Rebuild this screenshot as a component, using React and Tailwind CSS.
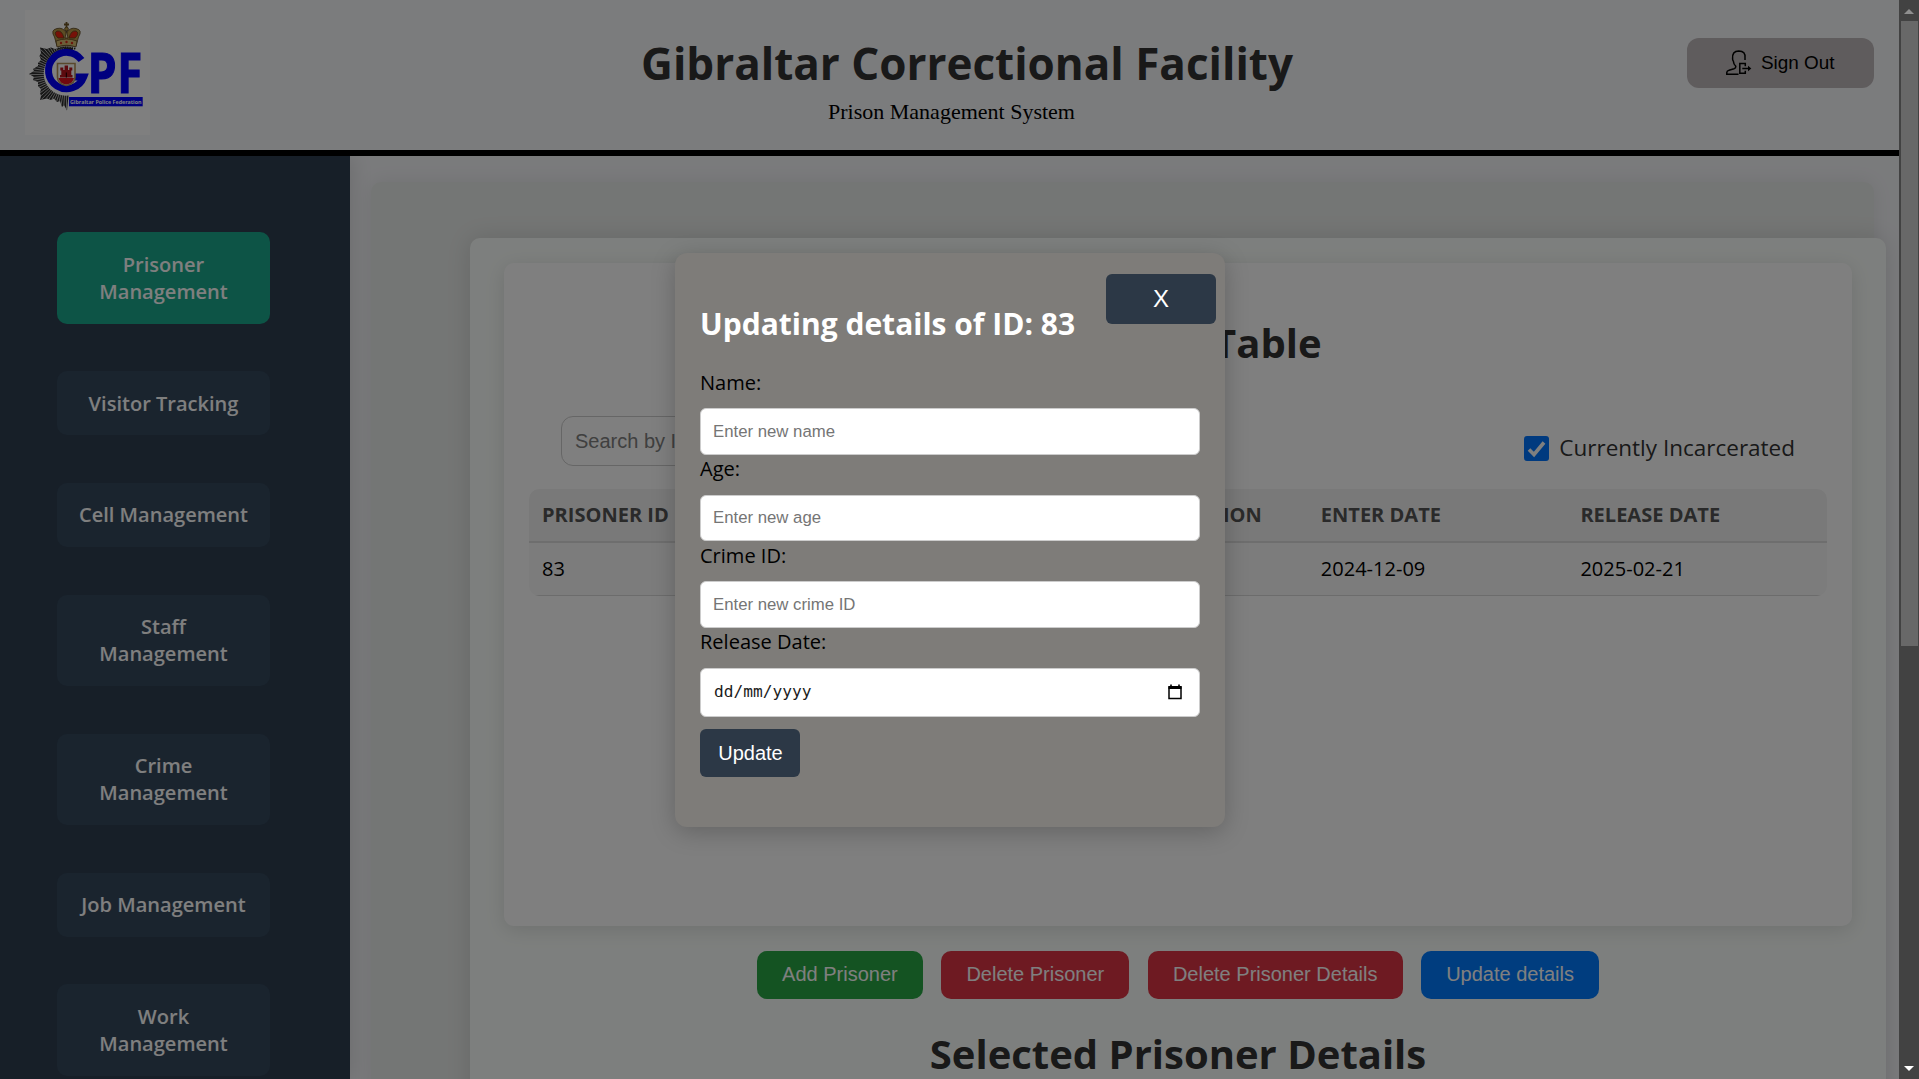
const NAV = [
  { lines: ["Prisoner", "Management"], active: true },
  { lines: ["Visitor Tracking"] },
  { lines: ["Cell Management"] },
  { lines: ["Staff", "Management"] },
  { lines: ["Crime", "Management"] },
  { lines: ["Job Management"] },
  { lines: ["Work", "Management"] },
];

const RAYS = Array.from({ length: 37 }, (_, i) => {
  const a = ((84 + i * 5) * Math.PI) / 180;
  return { x: 41 + 66 * Math.cos(a), y: 64 + 66 * Math.sin(a) };
});

function Logo() {
  return (
    <svg className="mt-[10px] block h-[125px] w-[125px] bg-[#fefefe]" viewBox="0 0 125 125">
      <defs>
        <clipPath id="star">
          <path d="M48 38 L38 37 L30 39 L26 37.500 L22 39 L15 37.500 L16 43 L14.500 46 L16 50 L13 53 L13 56 L8 59 L9 61 L4 64 L9 67 L8 70 L13 72 L13 76 L16 79 L15 83 L16 86 L15 90 L22 88.500 L26 90 L29 88.500 L32 92 L35 91 L37 97 L39 95 L42 100.500 L43.500 86 Z" />
        </clipPath>
      </defs>
      <g clipPath="url(#star)">
        <rect x="0" y="30" width="60" height="75" fill="#2c2c2c" />
        {RAYS.map((r, i) => (
          <line key={i} x1="41" y1="64" x2={r.x} y2={r.y} stroke="#c0c0c0" strokeWidth="0.9" />
        ))}
      </g>
      <circle cx="41" cy="63.500" r="22.300" fill="#fefefe" />
      <g stroke="#5a4420" strokeWidth="0.8">
        <path d="M32 36 L29.500 27 Q25 20 32 18.500 Q38 17 41.500 23 Q45 17 51 18.500 Q58 20 53.500 27 L51 36 Z" fill="#b89a4a" />
        <path d="M33 28 Q28 23 32 21 Q37 20 39 28 Z" fill="#ef2410" />
        <path d="M50 28 Q55 23 51 21 Q46 20 44 28 Z" fill="#ef2410" />
        <path d="M40 28 L41.500 21 L43 28 Z" fill="#f4e8c0" />
        <path d="M31 31 Q41.500 27 52 31 L51 37 Q41.500 33.500 32 37 Z" fill="#d7bd72" />
        <path d="M41.500 12 V21 M39 14.500 H44" stroke="#6d5526" strokeWidth="1.800" />
        <circle cx="41.500" cy="19" r="1.900" fill="#b89a4a" />
      </g>
      <g fill="#d42a18">
        <circle cx="36" cy="33" r="1.200" />
        <circle cx="41.500" cy="32" r="1.200" />
        <circle cx="47" cy="33" r="1.200" />
      </g>
      <path d="M33 38.500 Q41.500 36 51 39" stroke="#222" strokeWidth="1.600" fill="none" strokeDasharray="1.500 0.800" />
      <path d="M56.500 50 A18.200 18.200 0 1 0 58.700 67 H48" fill="none" stroke="#0000ff" strokeWidth="7" />
      <path d="M32.500 53.500 H50 V67 Q50 74 41.300 75.500 Q32.500 74 32.500 67 Z" fill="#fff" stroke="#b3935a" strokeWidth="1.600" />
      <path d="M33.500 68 H49 Q48 73.500 41.300 74.500 Q34.500 73.500 33.500 68 Z" fill="#e0101c" />
      <path d="M35 67.500 V65 H36.300 V60.500 H35.300 V57.500 H38.300 V60 H39.600 V55.500 H43 V60 H44.300 V57.500 H47.300 V60.500 H46.300 V65 H47.500 V67.500 Z" fill="#b8141c" />
      <path d="M40.800 62.500 H42 V67.500 H40.800 Z" fill="#300" />
      <g fill="#0000ff" stroke="#0000ff" strokeWidth="1.200" className="font-['Open_Sans'] font-bold" fontSize="56">
        <text x="62.600" y="82.800" textLength="29.200" lengthAdjust="spacingAndGlyphs">P</text>
        <text x="92.300" y="82.800" textLength="25" lengthAdjust="spacingAndGlyphs">F</text>
      </g>
      <rect x="44" y="87" width="73.700" height="9.300" fill="#0000ff" />
      <text x="45" y="93.900" textLength="71.500" lengthAdjust="spacingAndGlyphs" fontSize="6" fill="#fff" className="font-['Open_Sans'] font-bold">
        Gibraltar Police Federation
      </text>
    </svg>
  );
}

function SignOutIcon() {
  return (
    <svg className="h-[26px] w-[26px]" viewBox="0 0 26 26" fill="none" stroke="#000" strokeWidth="1.5">
      <path d="M12.500 24.300 H0.800 V22.500 Q0.800 20.800 3 20.200 L8 18.700 Q10 18 9.800 16.300 Q7.500 14 7.300 11 Q6.600 10.500 6.600 9 Q5.800 1 12.800 0.900 Q19.800 1 19 8 L19 10" />
      <path d="M19.300 16.200 V13.500 H13.800 V23.300 H19.300 V20.800" />
      <path d="M16.300 18.500 H23" />
      <path d="M22 15.800 L25.300 18.500 L22 21.200 Z" fill="#000" stroke="none" />
    </svg>
  );
}

function Header() {
  return (
    <header className="grid h-[156px] shrink-0 grid-cols-[125px_1fr_212px] border-b-[6px] border-black bg-[#f7f8fb] pl-[25px]">
      <Logo />
      <div className="pt-[33px] text-center">
        <h1 className="pl-[97px] text-[44px] leading-[60px] font-bold text-[#333]">Gibraltar Correctional Facility</h1>
        <p className="mt-[6px] pl-[66px] font-['Liberation_Serif'] text-[22px] leading-[25px] text-black">
          Prison Management System
        </p>
      </div>
      <button className="mt-[38px] flex h-[50px] w-[187px] items-center gap-[9px] rounded-xl bg-[#beb8ba] pl-[39px] font-['Liberation_Sans'] text-[18.9px] text-black">
        <SignOutIcon />
        <span>Sign Out</span>
      </button>
    </header>
  );
}

function Sidebar() {
  return (
    <nav className="z-10 flex w-[350px] shrink-0 flex-col gap-[47.500px] bg-[#2e3e50] pt-[76.300px] pl-[57px] shadow-[2px_0_20px_rgba(0,0,0,0.12)]">
      {NAV.map((item, i) => (
        <a
          key={i}
          className={
            "flex w-[213px] shrink-0 flex-col items-center justify-center rounded-[10px] text-[20.050px] leading-[27.200px] font-semibold text-white " +
            (item.lines.length > 1 ? "h-[91.500px] " : "h-[64.200px] ") +
            (item.active ? "bg-[#1aa88c]" : "bg-[#34485c]")
          }
        >
          {item.lines.map((l) => (
            <span key={l}>{l}</span>
          ))}
        </a>
      ))}
    </nav>
  );
}

function PrisonerTable() {
  const cols = ["Prisoner ID", "Name", "Crime Description", "Enter Date", "Release Date"];
  const row = ["83", "", "", "2024-12-09", "2025-02-21"];
  return (
    <div className="mx-[25px] mt-[23px] overflow-hidden rounded-[10px]">
      <div className="grid h-[54px] grid-cols-5 items-center border-b-2 border-[#dcdcdc] bg-[#f3f3f3] pb-px">
        {cols.map((c) => (
          <div key={c} className="pl-[13px] text-[20.050px] leading-[27px] font-bold whitespace-nowrap text-[#555] uppercase">
            {c}
          </div>
        ))}
      </div>
      <div className="grid h-[53px] grid-cols-5 items-center border-b border-[#d8d8d8] bg-[#f9f9f9] pb-px">
        {row.map((c, i) => (
          <div key={i} className="pl-[13px] text-[20.050px] leading-[27px] text-black">
            {c}
          </div>
        ))}
      </div>
    </div>
  );
}

function Main() {
  return (
    <main className="flex-1 bg-[#f5f6f9] pt-[26px] pl-[21px]">
      <div className="h-[1400px] w-[1503px] rounded-[10px] bg-[#e9ecea] pt-[56px] pl-[99px] shadow-[0_0_20px_rgba(0,0,0,0.08)]">
        <section className="flex h-[1300px] w-[1416px] flex-col items-center rounded-[10px] bg-[#fbfffc] pt-[25px] shadow-[0_0_24px_rgba(0,0,0,0.12)]">
          <div className="h-[663px] w-[1348px] rounded-[10px] bg-white pt-[53px] shadow-[0_4px_20px_rgba(0,0,0,0.12)]">
            <h2 className="text-center text-[40px] leading-[54px] font-bold text-[#333]">Prisoner Table</h2>
            <div className="mt-[46px] flex h-[50px] items-start justify-between pr-[57px] pl-[57px]">
              <input
                className="h-[50px] w-[360px] rounded-xl border border-[#ccc] bg-white pl-[13px] font-['Liberation_Sans'] text-[20px] placeholder:text-[#808080]"
                placeholder="Search by ID or name"
              />
              <label className="mt-[16px] flex items-center gap-[10px] text-[22.500px] leading-[31px] text-[#333]">
                <svg className="mt-px h-[25px] w-[25px]" viewBox="0 0 25 25">
                  <rect width="25" height="25" rx="3" fill="#0075ff" />
                  <path d="M5 13.500 L10 18.500 L20 6.500" stroke="#fff" strokeWidth="3.600" fill="none" />
                </svg>
                Currently Incarcerated
              </label>
            </div>
            <PrisonerTable />
          </div>
          <div className="mt-[25px] flex gap-[18.400px] font-['Liberation_Sans'] text-[20px] text-white">
            <button className="h-[48px] w-[166px] rounded-[10px] bg-[#28a745] pb-[2px]">Add Prisoner</button>
            <button className="h-[48px] w-[188px] rounded-[10px] bg-[#dc3545] pb-[2px]">Delete Prisoner</button>
            <button className="h-[48px] w-[255px] rounded-[10px] bg-[#dc3545] pb-[2px]">Delete Prisoner Details</button>
            <button className="h-[48px] w-[178px] rounded-[10px] bg-[#007bff] pb-[2px]">Update details</button>
          </div>
          <h2 className="mt-[28px] text-[40px] leading-[54px] font-bold text-[#333]">Selected Prisoner Details</h2>
        </section>
      </div>
    </main>
  );
}

function Field({ label, placeholder }) {
  return (
    <label className="block pb-[0.500px] text-[20.050px] leading-[27.500px] text-black">
      {label}
      <input
        className="mt-[12px] block h-[46.500px] w-full rounded-md border border-[#ccc] bg-white pt-px pl-[12px] font-['Liberation_Sans'] text-[16.750px] leading-[20px] placeholder:text-[#757575]"
        placeholder={placeholder}
      />
    </label>
  );
}

function CalendarIcon() {
  return (
    <svg className="h-[16px] w-[14px]" viewBox="0 0 14 16">
      <path d="M1 3 H13 V14.500 H1 Z" fill="none" stroke="#000" strokeWidth="1.500" />
      <path d="M0.500 2 H13.500 V5 H0.500 Z M2.200 0.500 H3.800 V3 H2.200 Z M10.200 0.500 H11.800 V3 H10.200 Z" fill="#000" />
    </svg>
  );
}

function UpdateModal() {
  return (
    <div className="relative h-[574px] w-[550px] rounded-[12px] bg-[#7e7c79] px-[25px] pt-[50px] shadow-[0_5px_25px_rgba(0,0,0,0.22)]">
      <button className="absolute top-[21px] right-[9px] h-[50px] w-[110px] rounded-md bg-[#2c3846] font-['Liberation_Sans'] text-[24px] leading-none text-white">
        X
      </button>
      <h3 className="text-[30px] leading-[41px] font-bold text-white">Updating details of ID: 83</h3>
      <div className="mt-[24.600px]">
        <Field label="Name:" placeholder="Enter new name" />
        <Field label="Age:" placeholder="Enter new age" />
        <Field label="Crime ID:" placeholder="Enter new crime ID" />
        <div className="text-[20.050px] leading-[27.500px] text-black">Release Date:</div>
        <div className="mt-[12px] flex h-[49px] items-center justify-between rounded-md border border-[#ccc] bg-white pr-[17px] pl-[13px] font-['DejaVu_Sans_Mono'] text-[16.200px] text-[#1c1c1c]">
          <span>dd/mm/yyyy</span>
          <CalendarIcon />
        </div>
      </div>
      <button className="mt-[12px] h-[48px] w-[100px] rounded-md bg-[#2c3846] pt-px pl-px font-['Liberation_Sans'] text-[20px] text-white">
        Update
      </button>
    </div>
  );
}

function Scrollbar() {
  return (
    <div className="flex h-full w-[20px] shrink-0 flex-col items-center bg-[#424242]">
      <svg className="h-[21px] w-[20px] shrink-0" viewBox="0 0 20 21">
        <path d="M5 14 L10 9 L15 14 Z" fill="#8f8f8f" />
      </svg>
      <div className="ml-[1px] h-[625px] w-[17px] bg-[#686868]" />
      <svg className="mt-auto h-[20px] w-[20px] shrink-0" viewBox="0 0 20 20">
        <path d="M5 7 L15 7 L10 12 Z" fill="#fff" />
      </svg>
    </div>
  );
}

export default function App() {
  return (
    <div className="flex h-screen w-screen overflow-hidden font-['Open_Sans',sans-serif]">
      <div className="relative flex h-full w-[1899px] shrink-0 flex-col overflow-hidden">
        <Header />
        <div className="flex min-h-0 flex-1 overflow-hidden">
          <Sidebar />
          <Main />
        </div>
        <div className="absolute inset-0 z-20 flex items-center justify-center bg-black/50 pt-px pl-px">
          <UpdateModal />
        </div>
      </div>
      <Scrollbar />
    </div>
  );
}
